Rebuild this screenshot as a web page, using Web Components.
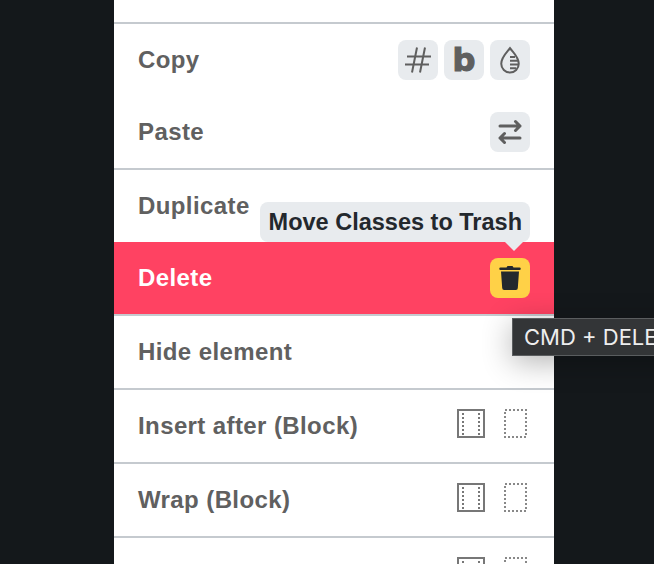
<!DOCTYPE html>
<html>
<head>
<meta charset="utf-8">
<style>
  html, body { margin: 0; height: 564px; overflow: hidden; background: #14181b; }
  body { font-family: "Liberation Sans", Arial, sans-serif; }
</style>
</head>
<body>
<context-menu>
  <menu-row class="stub"></menu-row>
  <menu-divider></menu-divider>
  <menu-row label="Copy">
    <icon-button><svg width="28" height="28" viewBox="0 0 28 28" fill="none" stroke="#5f5f5f" stroke-width="2"><path d="M3 10.500H27M1 18.500H25M13 1.500 8 26.500M21 1.500 16 26.500"/></svg></icon-button>
    <icon-button><span class="b">b</span></icon-button>
    <icon-button><svg width="30" height="30" viewBox="0 0 24 24" fill="none" stroke="#5f5f5f" stroke-width="1.600"><path d="M12 2.500C9.500 6 5 9.500 5 15a7 7 0 0 0 14 0C19 9.500 14.500 6 12 2.500Z"/><path d="M12 9.500h4M12 12.500h6.500M12 15.500h6.500M12 18.500h5"/></svg></icon-button>
  </menu-row>
  <menu-row label="Paste">
    <icon-button><svg width="26" height="26" viewBox="0 0 26 26" fill="none" stroke="#5f5f5f" stroke-width="3" stroke-linecap="round" stroke-linejoin="round"><path d="M3 7H23M18.500 2.500 23 7l-4.500 4.500M23 19H3M7.500 14.500 3 19l4.500 4.500"/></svg></icon-button>
  </menu-row>
  <menu-divider></menu-divider>
  <menu-row label="Duplicate"></menu-row>
  <menu-row label="Delete" danger>
    <hover-tip slot="tip">Move Classes to Trash</hover-tip>
    <icon-button warn><svg width="24" height="26" viewBox="0 0 24 26" fill="#23282d"><path d="M9.500 1h5l1 1.500h6a1 1 0 0 1 0 2.500H2.500a1 1 0 0 1 0-2.500h6Z"/><path d="M3 6.500h18l-1.200 16.500a2 2 0 0 1-2 2H6.200a2 2 0 0 1-2-2Z"/></svg></icon-button>
  </menu-row>
  <menu-divider></menu-divider>
  <menu-row label="Hide element"></menu-row>
  <menu-divider></menu-divider>
  <menu-row label="Insert after (Block)"><block-icons></block-icons></menu-row>
  <menu-divider></menu-divider>
  <menu-row label="Wrap (Block)"><block-icons></block-icons></menu-row>
  <menu-divider></menu-divider>
  <menu-row><block-icons></block-icons></menu-row>
</context-menu>
<key-tip>CMD + DELETE</key-tip>

<script>
class ContextMenu extends HTMLElement {
  constructor() {
    super();
    this.attachShadow({ mode: "open" });
    this.shadowRoot.innerHTML = `
      <style>
        :host {
          display: flex;
          flex-direction: column;
          width: 440px;
          margin-left: 114px;
          background: #fff;
        }
      </style>
      <slot></slot>
    `;
  }
}

class MenuDivider extends HTMLElement {
  constructor() {
    super();
    this.attachShadow({ mode: "open" });
    this.shadowRoot.innerHTML = `
      <style>
        :host { display: block; height: 2px; background: #c5cacf; }
      </style>
    `;
  }
}

class MenuRow extends HTMLElement {
  constructor() {
    super();
    this.attachShadow({ mode: "open" });
    const label = this.getAttribute("label") || "";
    this.shadowRoot.innerHTML = `
      <style>
        :host {
          display: flex;
          position: relative;
          align-items: center;
          justify-content: space-between;
          flex: none;
          box-sizing: border-box;
          height: 72px;
          padding: 0 24px;
          color: #606060;
          background: #fff;
        }
        :host(.stub) { height: 22px; }
        :host([danger]) { background: #ff4262; color: #fff; }
        .label { font-size: 24px; font-weight: 700; letter-spacing: 0.4px; }
        .icons { display: flex; gap: 6px; align-items: center; }
      </style>
      <span class="label">${label}</span>
      <div class="icons"><slot></slot></div>
      <slot name="tip"></slot>
    `;
  }
}

class IconButton extends HTMLElement {
  constructor() {
    super();
    this.attachShadow({ mode: "open" });
    this.shadowRoot.innerHTML = `
      <style>
        :host {
          display: flex;
          align-items: center;
          justify-content: center;
          width: 40px;
          height: 40px;
          border-radius: 8px;
          background: #e8ebee;
        }
        :host([warn]) { background: #ffd147; }
        ::slotted(.b) {
          font: 700 32px/1 "DejaVu Sans", sans-serif;
          -webkit-text-stroke: 1.2px #5f5f5f;
          color: #5f5f5f;
        }
      </style>
      <slot></slot>
    `;
  }
}

class BlockIcons extends HTMLElement {
  constructor() {
    super();
    this.attachShadow({ mode: "open" });
    this.shadowRoot.innerHTML = `
      <style>
        :host { display: flex; gap: 19px; margin: -5px 3px 0 0; }
        svg { display: block; }
      </style>
      <svg width="28" height="29" viewBox="0 0 28 29" fill="none">
        <rect x="1" y="1" width="26" height="27" stroke="#777" stroke-width="2"/>
        <path d="M6 4V26M22 4V26" stroke="#777" stroke-width="2" stroke-dasharray="2 2"/>
      </svg>
      <svg width="23" height="29" viewBox="0 0 23 29" fill="none">
        <rect x="1" y="1" width="21" height="27" stroke="#888" stroke-width="2" stroke-dasharray="2 2"/>
      </svg>
    `;
  }
}

class HoverTip extends HTMLElement {
  constructor() {
    super();
    this.attachShadow({ mode: "open" });
    this.shadowRoot.innerHTML = `
      <style>
        :host {
          position: absolute;
          right: 24px;
          bottom: 100%;
          box-sizing: border-box;
          height: 40px;
          padding: 0 8px 0 9px;
          display: flex;
          align-items: center;
          white-space: nowrap;
          background: #e8ebee;
          border-radius: 8px;
          color: #23282d;
          font-size: 23.500px;
          font-weight: 700;
          z-index: 2;
        }
        :host::after {
          content: "";
          position: absolute;
          right: 7px;
          top: 100%;
          border: 9px solid transparent;
          border-top-color: #e8ebee;
          border-bottom: 0;
        }
      </style>
      <slot></slot>
    `;
  }
}

class KeyTip extends HTMLElement {
  constructor() {
    super();
    this.attachShadow({ mode: "open" });
    this.shadowRoot.innerHTML = `
      <style>
        :host {
          position: absolute;
          left: 512px;
          top: 318px;
          box-sizing: border-box;
          height: 38px;
          padding: 0 11px;
          display: flex;
          align-items: center;
          white-space: nowrap;
          background: #333537;
          border: 1px solid #5a5d5f;
          color: #eee;
          font: 400 22px Inter, "Liberation Sans", sans-serif;
          box-shadow: 0 6px 30px rgba(0, 0, 0, 0.3);
          z-index: 3;
        }
      </style>
      <slot></slot>
    `;
  }
}

customElements.define("context-menu", ContextMenu);
customElements.define("menu-divider", MenuDivider);
customElements.define("menu-row", MenuRow);
customElements.define("icon-button", IconButton);
customElements.define("block-icons", BlockIcons);
customElements.define("hover-tip", HoverTip);
customElements.define("key-tip", KeyTip);
</script>
</body>
</html>
